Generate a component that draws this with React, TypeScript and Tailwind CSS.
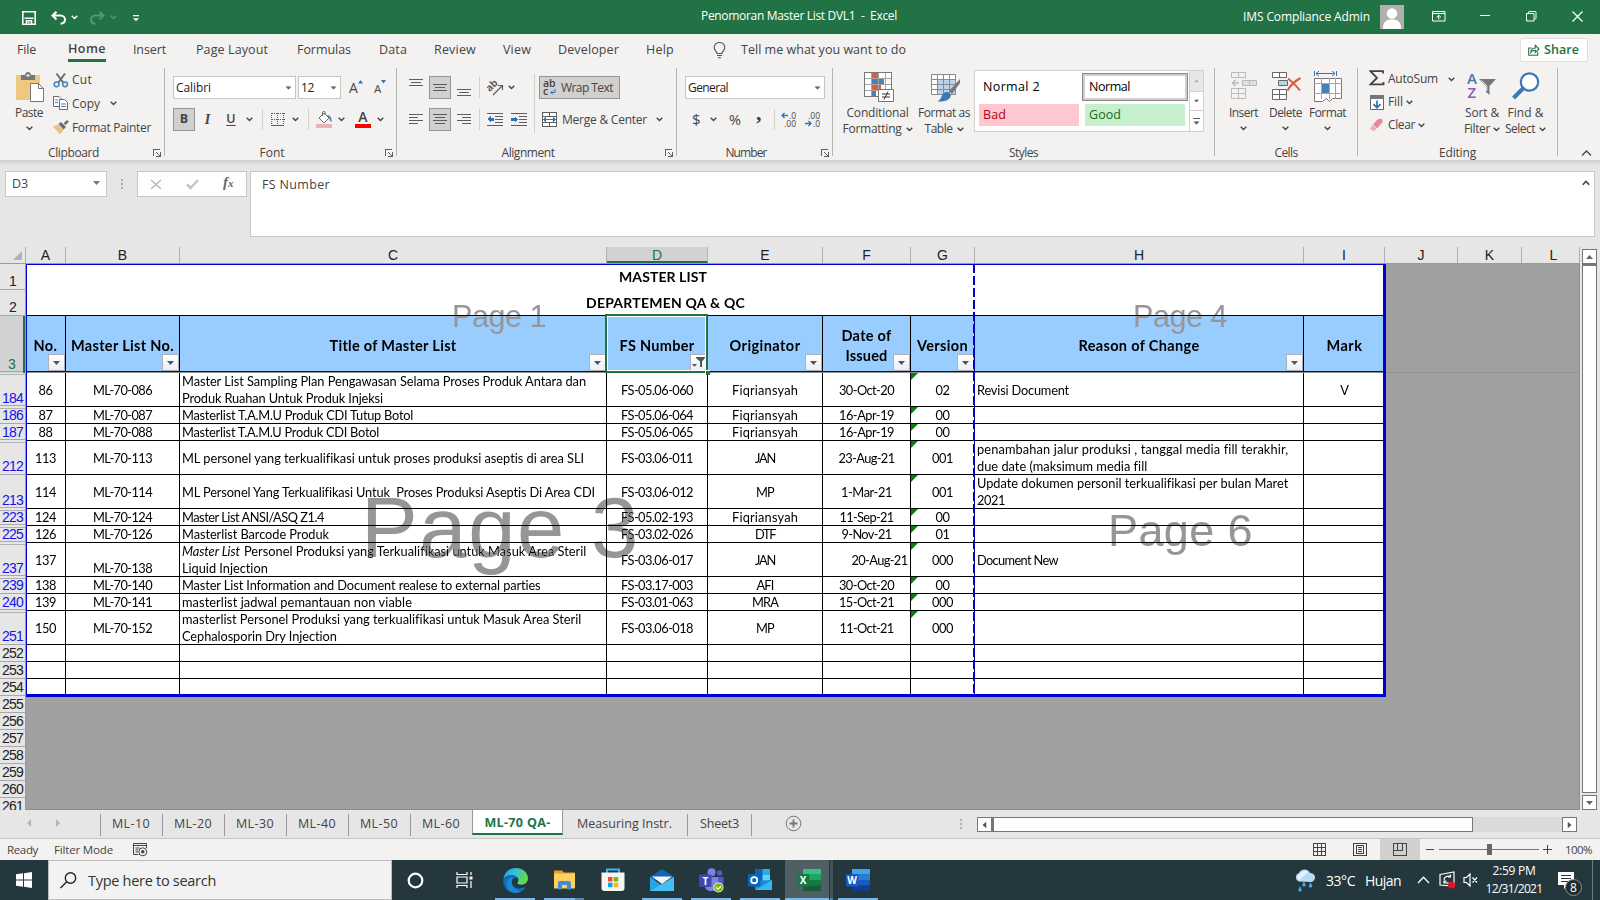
import { useLayoutEffect, useRef, useState, type ReactNode } from "react";

/* Text set to an exact advance width by spreading the difference over its letters. */
function Fit({ w, t, c = "" }: { w: number; t: string; c?: string }) {
  const ref = useRef<HTMLSpanElement>(null);
  const [ls, setLs] = useState(0);
  useLayoutEffect(() => {
    if (ref.current) {
      const nat = ref.current.getBoundingClientRect().width;
      setLs((w - nat) / t.length);
    }
  }, []);
  return (
    <span className={`inline-block shrink-0 whitespace-pre ${c}`} style={{ width: w }}>
      <span ref={ref} style={{ letterSpacing: ls }}>{t}</span>
    </span>
  );
}

function Chev({ c = "" }: { c?: string }) {
  return (
    <svg className={`shrink-0 ${c}`} width="7" height="5" viewBox="0 0 7 5" fill="none" stroke="currentColor" strokeWidth="1.4">
      <path d="M0.7 0.8 3.5 3.5 6.3 0.8" />
    </svg>
  );
}
function Tri({ c = "" }: { c?: string }) {
  return (
    <svg className={`shrink-0 ${c}`} width="7" height="4" viewBox="0 0 7 4" fill="currentColor">
      <path d="M0 0h7L3.5 4z" />
    </svg>
  );
}

/* Horizontal text-line icon; every entry is [x, y, width]. */
function Lines({ l, w = 14, h = 13, c = "", children }: { l: number[][]; w?: number; h?: number; c?: string; children?: ReactNode }) {
  return (
    <svg className={`shrink-0 ${c}`} width={w} height={h} shapeRendering="crispEdges">
      {l.map((a, i) => (
        <rect key={i} x={a[0]} y={a[1]} width={a[2]} height="1" fill="#5f5d5b" />
      ))}
      {children}
    </svg>
  );
}

function TitleBar() {
  return (
    <header className="flex h-[34px] items-center bg-[#217346] text-[12px] text-white">
      <svg className="ml-[22px] mt-[2px]" width="14" height="14" fill="none" stroke="#fff" strokeWidth="1.6">
        <path d="M0.8 0.8h12.4v12.4H0.8zM2.5 7.2h9M4.5 13V9.8h5V13" />
        <path d="M6 11.5h1.5" />
      </svg>
      <svg className="ml-[15px] mt-[2px]" width="15" height="14" fill="none" stroke="#fff" strokeWidth="2">
        <path d="M5.5 0.8 1.5 4.6 5.5 8.4M1.5 4.6H9.5c3 0 4.5 2 4.5 4s-1.600 4-4.500 4.200" />
      </svg>
      <Chev c="ml-[5px]" />
      <svg className="ml-[12px] mt-[2px] opacity-25" width="15" height="14" fill="none" stroke="#fff" strokeWidth="2">
        <path d="M9.500 0.800 13.500 4.600 9.500 8.400M13.500 4.600H5.500c-3 0-4.500 2-4.500 4s1.600 4 4.500 4.200" />
      </svg>
      <Chev c="ml-[5px] opacity-25" />
      <svg className="ml-[16px] mt-[2px]" width="6" height="7" fill="#fff">
        <path d="M0 0h6v1.200H0zM0 3.300h6L3 6.300z" />
      </svg>
      <Fit c="ml-[562px] -mt-[3px]" w={196} t="Penomoran Master List DVL1  -  Excel" />
      <Fit c="ml-[346px]" w={127} t="IMS Compliance Admin" />
      <svg className="ml-[10px]" width="24" height="24">
        <rect width="24" height="24" fill="#b1b0af" />
        <circle cx="12" cy="8.500" r="5.200" fill="#fff" />
        <path d="M3 24c0-7 2.500-9.500 9-9.500s9 2.500 9 9.500z" fill="#fff" />
      </svg>
      <svg className="ml-[28px] -mt-[2px]" width="14" height="11" fill="none" stroke="#fff">
        <path d="M0.500 0.500h12.500v9.500H0.500zM0.500 2.500h12.500M6.700 8.500V4.500M4.500 6.300 6.700 4.200 9 6.300" />
      </svg>
      <div className="ml-[34px] -mt-[3px] h-px w-[10px] bg-white" />
      <svg className="ml-[36px] -mt-[2px]" width="11" height="11" fill="none" stroke="#fff">
        <path d="M0.500 2.500h7.500v7.500H0.500zM2.500 2.300V1.200q0-.7.700-.7h6q.8 0 .8.800v6q0 .7-.7.700h-1" />
      </svg>
      <svg className="ml-[35px] -mt-[2px]" width="11" height="11" fill="none" stroke="#fff" strokeWidth="1.200">
        <path d="M0.500 0.500l10 10M10.500 0.500l-10 10" />
      </svg>
    </header>
  );
}

function Tabs() {
  return (
    <nav className="flex h-[34px] items-center text-[12.5px] text-[#444]">
      <Fit c="ml-[17px] -mt-[1px]" w={19} t="File" />
      <div className="ml-[32px] flex h-[28px] w-[38px] flex-col self-start border-b-[3px] border-[#217346] pt-[6px]">
        <Fit c="font-semibold" w={38} t="Home" />
      </div>
      <Fit c="ml-[27px] -mt-[1px]" w={33} t="Insert" />
      <Fit c="ml-[30px] -mt-[1px]" w={72} t="Page Layout" />
      <Fit c="ml-[29px] -mt-[1px]" w={54} t="Formulas" />
      <Fit c="ml-[28px] -mt-[1px]" w={28} t="Data" />
      <Fit c="ml-[27px] -mt-[1px]" w={42} t="Review" />
      <Fit c="ml-[27px] -mt-[1px]" w={28} t="View" />
      <Fit c="ml-[27px] -mt-[1px]" w={61} t="Developer" />
      <Fit c="ml-[27px] -mt-[1px]" w={28} t="Help" />
      <svg className="ml-[39px] -mt-[1px]" width="13" height="17" fill="none" stroke="#555" strokeWidth="1.100">
        <path d="M4 11.500C4 9.500 1.200 8.500 1.200 5.500a5.300 5 0 0 1 10.600 0C11.800 8.500 9 9.500 9 11.500zM4 13.500h5M5 15.800h3" />
      </svg>
      <Fit c="ml-[15px] -mt-[1px]" w={165} t="Tell me what you want to do" />
      <div className="-mt-[3px] ml-[614px] flex h-[24px] w-[68px] items-center rounded-[2px] border border-[#e1dfdd] bg-white font-semibold text-[#217346]">
        <svg className="ml-[7px]" width="12" height="12" fill="none" stroke="#217346" strokeWidth="1.100">
          <path d="M3.500 4H0.700v7.300h9V8M2.800 8.500C3 5.500 4.500 4 7.300 4V1.300l3.700 3.700-3.700 3.400V6.300C5 6.200 4 6.800 2.800 8.500z" />
        </svg>
        <Fit c="ml-[4px] mt-px" w={35} t="Share" />
      </div>
    </nav>
  );
}

function Group({ c, label, w, launcher, children }: { c: string; label: string; w: number; launcher?: boolean; children: ReactNode }) {
  return (
    <section className={`flex h-[92px] shrink-0 ${c}`}>
      <div className="flex min-w-0 flex-1 flex-col">
        <div className="h-[76px]">{children}</div>
        <div className="flex h-[16px] items-center">
          <div className={`flex flex-1 justify-center ${launcher ? "pr-[6px]" : ""}`}><Fit c="mt-px" w={w} t={label} /></div>
          {launcher && (
            <svg className="mr-[3px] mt-px shrink-0" width="8" height="8" fill="none" stroke="#605e5c" shapeRendering="crispEdges">
              <path d="M0.500 7V0.500H7M3 3l4 4M7.500 3v4.500H3" />
            </svg>
          )}
        </div>
      </div>
      <div className="h-[88px] w-px bg-[#b8b6b4]" />
    </section>
  );
}

function Sep({ c = "" }: { c?: string }) {
  return <div className={`h-[21px] w-px shrink-0 bg-[#d2d0ce] ${c}`} />;
}

function ClipboardGroup() {
  return (
    <Group c="w-[165px]" label="Clipboard" w={51} launcher>
      <div className="flex">
        <div className="flex w-[53px] flex-col items-center pl-[5px]">
          <svg className="ml-[3px] mt-[4px]" width="29" height="31">
            <path d="M0 3h24v25H0z" fill="#edc87e" />
            <path d="M5 3h4c0-4 6-4 6 0h4v5H5z" fill="#777" />
            <rect x="10.500" y="2.500" width="3" height="2" fill="#f3f2f1" />
            <path d="M14.500 11.500h8l5 5V29.500h-13z" fill="#fff" stroke="#777" />
            <path d="M22.500 11.500v5h5" fill="none" stroke="#777" />
          </svg>
          <Fit c="mt-[2px] leading-4" w={28} t="Paste" />
          <Chev c="mt-[5px]" />
        </div>
        <div className="flex flex-col">
          <div className="mt-px flex h-[21px] items-center">
            <svg width="16" height="16" fill="none" strokeWidth="1.500">
              <path d="M3.500 1.500 10.500 11M12 1.500 5 11" stroke="#6b6b6b" strokeWidth="2" />
              <circle cx="3.600" cy="12.300" r="2.400" stroke="#4a7fb8" />
              <circle cx="12" cy="12.300" r="2.400" stroke="#4a7fb8" />
            </svg>
            <Fit c="ml-[3px]" w={20} t="Cut" />
          </div>
          <div className="mt-[3px] flex h-[21px] items-center">
            <svg width="16" height="15" fill="#fff" stroke="#6b6b6b">
              <path d="M0.500 0.500h5.500l2 2V10.500h-7.500z" />
              <path d="M6.500 3.500h5l3 3V13.500h-8z" />
              <path d="M2 4h3M2 6.500h3M8 8h5M8 10.500h5" stroke="#4a7fb8" />
            </svg>
            <Fit c="ml-[3px]" w={28} t="Copy" />
            <Chev c="ml-[10px]" />
          </div>
          <div className="mt-[3px] flex h-[21px] items-center">
            <svg width="16" height="15">
              <path d="M0 6.500 5 4.500 10.500 10 7 14.500z" fill="#edc081" />
              <path d="M5.500 4 8 2l5 5-2.500 2.500zM10.500 3.500 14 0l1.800 1.800L12.500 5z" fill="#6b6b6b" />
            </svg>
            <Fit c="ml-[3px]" w={79} t="Format Painter" />
          </div>
        </div>
      </div>
    </Group>
  );
}

function FontGroup() {
  return (
    <Group c="w-[232px]" label="Font" w={25} launcher>
      <div className="flex h-[31px] pt-[8px]">
        <div className="ml-[8px] flex h-[23px] w-[123px] items-center border border-[#c8c6c4] bg-white text-[#222]">
          <Fit c="ml-[2px]" w={35} t="Calibri" />
          <Tri c="ml-auto mr-[3px] scale-90 text-[#666]" />
        </div>
        <div className="ml-[2px] flex h-[23px] w-[43px] items-center border border-[#c8c6c4] bg-white text-[#222]">
          <Fit c="ml-[2px]" w={13} t="12" />
          <Tri c="ml-auto mr-[3px] scale-90 text-[#666]" />
        </div>
        <div className="ml-[8px] flex h-[23px] w-[14px] items-start text-[14px]">
          <span className="w-[9px] leading-[23px]">A</span>
          <svg className="mt-[4px] shrink-0" width="5" height="4" fill="#2f75b5"><path d="M0 3.500 2.500 0 5 3.500z" /></svg>
        </div>
        <div className="ml-[11px] flex h-[23px] w-[14px] items-start text-[11.500px]">
          <span className="w-[7px] pt-[1px] leading-[23px]">A</span>
          <svg className="mt-[4px] shrink-0" width="5" height="4" fill="#2f75b5"><path d="M0 0h5L2.500 3.500z" /></svg>
        </div>
      </div>
      <div className="mt-[9px] flex h-[23px] items-center">
        <div className="ml-[8px] flex h-[23px] w-[22px] items-center justify-center border border-[#979593] bg-[#d2d0ce] text-[12.500px] font-bold">B</div>
        <span className="ml-[8px] w-[9px] text-center text-[14px] italic font-bold font-['Liberation_Serif',serif]">I</span>
        <span className="ml-[14px] w-[10px] text-center text-[12.500px] font-semibold underline underline-offset-2">U</span>
        <Chev c="ml-[10px]" />
        <Sep c="ml-[9px]" />
        <svg className="ml-[8px]" width="14" height="14" fill="none" stroke="#605e5c" shapeRendering="crispEdges">
          <path d="M0.500 0.500h13M0.500 6.500h13M0.500 0v12M6.500 0v12M12.500 0v12" strokeDasharray="1 1" />
          <path d="M0 12.500h13" strokeWidth="1.500" />
        </svg>
        <Chev c="ml-[7px]" />
        <Sep c="ml-[9px]" />
        <svg className="ml-[7px]" width="16" height="17">
          <path d="M3 7 8 2l5 5-5 5z" fill="#fff" stroke="#6b6b6b" />
          <path d="M6.500 5V1.500c0-1.500 2.500-1.500 2.500 0V4" fill="none" stroke="#6b6b6b" />
          <path d="M11 4c3 0 5 2 4.500 7-1.500-.5-2-2-2-4z" fill="#4a7fb8" />
          <rect y="13" width="16" height="4" fill="#e8b4b4" />
        </svg>
        <Chev c="ml-[6px]" />
        <div className="ml-[10px] flex h-[17px] w-[16px] flex-col items-center border-b-4 border-[#f00] text-[14px] font-semibold leading-[12px]">A</div>
        <Chev c="ml-[6px]" />
      </div>
    </Group>
  );
}

const pressed = "flex h-[23px] w-[22px] shrink-0 items-center justify-center border border-[#979593] bg-[#d2d0ce]";

function AlignmentGroup() {
  return (
    <Group c="w-[280px]" label="Alignment" w={53} launcher>
      <div className="flex">
        <div className="flex w-[137px] flex-col">
          <div className="mt-[8px] flex h-[23px] items-center">
            <Lines c="ml-[12px]" h={17} l={[[0, 0, 14], [2, 3, 10], [0, 6, 14]]} />
            <div className={`ml-[6px] ${pressed}`}><Lines h={7} l={[[0, 0, 14], [2, 3, 10], [0, 6, 14]]} /></div>
            <Lines c="ml-[6px]" h={17} l={[[0, 10, 14], [2, 13, 10], [0, 16, 14]]} />
            <Sep c="ml-[8px]" />
            <svg className="ml-[7px] overflow-visible" width="17" height="17" fill="none" stroke="#605e5c">
              <text x="0" y="9.500" transform="rotate(-45 6 8)" fontSize="10" fill="#605e5c" stroke="none" fontWeight="700">ab</text>
              <path d="M6 16 15 7M11 6.500h4.500V11" strokeWidth="1.200" />
            </svg>
            <Chev c="ml-[4px]" />
          </div>
          <div className="mt-[9px] flex h-[23px] items-center">
            <Lines c="ml-[12px]" l={[[0, 1, 14], [0, 4, 9], [0, 7, 14], [0, 10, 9]]} />
            <div className={`ml-[6px] ${pressed}`}><Lines l={[[0, 1, 14], [2, 4, 10], [0, 7, 14], [2, 10, 10]]} /></div>
            <Lines c="ml-[6px]" l={[[0, 1, 14], [5, 4, 9], [0, 7, 14], [5, 10, 9]]} />
            <Sep c="ml-[8px]" />
            <Lines c="ml-[7px]" w={16} l={[[0, 0, 16], [8, 3, 8], [8, 6, 8], [8, 9, 8], [0, 12, 16]]}>
              <path d="M0 6 3.500 3v2H7v2.500H3.500V9.500z" fill="#2f75b5" />
            </Lines>
            <Lines c="ml-[8px]" w={16} l={[[0, 0, 16], [8, 3, 8], [8, 6, 8], [8, 9, 8], [0, 12, 16]]}>
              <path d="M7 6 3.500 3v2H0v2.500h3.500V9.500z" fill="#2f75b5" />
            </Lines>
          </div>
        </div>
        <div className="mt-[6px] h-[59px] w-px bg-[#d2d0ce]" />
        <div className="flex flex-col">
          <div className="ml-[4px] mt-[8px] flex h-[23px] w-[81px] items-center border border-[#979593] bg-[#d2d0ce]">
            <svg className="ml-[3px] overflow-visible" width="14" height="17" fontSize="10.500" fontWeight="600" fill="#444">
              <text x="0" y="8">ab</text>
              <text x="0" y="16">c</text>
              <path d="M12 10v3.500H8M9.800 11.500l-2 2 2 2" fill="none" stroke="#2f75b5" />
            </svg>
            <Fit c="ml-[4px]" w={52} t="Wrap Text" />
          </div>
          <div className="ml-[7px] mt-[9px] flex h-[23px] items-center">
            <svg width="15" height="15" fill="#fff" stroke="#605e5c" shapeRendering="crispEdges">
              <path d="M0.500 0.500h14v14H0.500zM0.500 4.500h14M0.500 10.500h14M7.500 0.500v4M7.500 10.500v4" />
              <path d="M2 7.500h11M4 5.500l-2 2 2 2M11 5.500l2 2-2 2" fill="none" stroke="#2f75b5" />
            </svg>
            <Fit c="ml-[5px]" w={85} t="Merge & Center" />
            <Chev c="ml-[9px]" />
          </div>
        </div>
      </div>
    </Group>
  );
}

function Decimal({ a, b, left, c }: { a: string; b: string; left?: boolean; c: string }) {
  return (
    <svg className={`shrink-0 overflow-visible ${c}`} width="16" height="16" fontSize="8.500" fill="#444">
      <text x="15" y="7" textAnchor="end">{a}</text>
      <text x="15" y="15" textAnchor="end">{b}</text>
      {left ? (
        <path d="M1 3.500h6M3.500 1 1 3.500 3.500 6" fill="none" stroke="#2f75b5" strokeWidth="1.300" />
      ) : (
        <path d="M0 11.500h6M3.500 9 6 11.500 3.500 14" fill="none" stroke="#2f75b5" strokeWidth="1.300" />
      )}
    </svg>
  );
}

function NumberGroup() {
  return (
    <Group c="w-[156px]" label="Number" w={41} launcher>
      <div className="ml-[8px] flex h-[31px] pt-[8px]">
        <div className="flex h-[23px] w-[140px] items-center border border-[#c8c6c4] bg-white text-[#222]">
          <Fit c="ml-[2px]" w={40} t="General" />
          <Tri c="ml-auto mr-[3px] scale-90 text-[#666]" />
        </div>
      </div>
      <div className="mt-[9px] flex h-[23px] items-center">
        <span className="ml-[15px] w-[9px] text-[15px]">$</span>
        <Chev c="ml-[9px]" />
        <span className="ml-[12px] w-[14px] text-[14.500px]">%</span>
        <span className="-mt-[15px] ml-[13px] w-[8px] font-['Liberation_Serif',serif] text-[22px] font-bold">,</span>
        <Sep c="ml-[10px]" />
        <Decimal c="ml-[6px]" a=".0" b=".00" left />
        <Decimal c="ml-[8px]" a=".00" b=".0" />
      </div>
    </Group>
  );
}

function StylesGroup() {
  return (
    <Group c="w-[382px]" label="Styles" w={29}>
      <div className="flex">
        <div className="flex w-[89px] flex-col items-center">
          <svg className="ml-[2px] mt-[4px]" width="30" height="30">
            <path d="M0.500 0.500h27v24H0.500z" fill="#fff" stroke="#777" />
            <path d="M8 1h6v6H8zM8 13h9v6H8z" fill="#d9603b" />
            <path d="M8 7h12v6H8zM8 19h4v6H8z" fill="#4a7fb8" />
            <path d="M0 6.500h28M0 12.500h28M0 18.500h28M7.500 0v25M14.500 0v25M21.500 0v25" stroke="#a5a5a5" fill="none" />
            <path d="M0.500 0.500h27v24H0.500z" fill="none" stroke="#777" />
            <path d="M14.500 17.500h15v12h-15z" fill="#fff" stroke="#777" />
            <path d="M18 22h8M18 25h8M24 19.500l-4 8" stroke="#333" fill="none" />
          </svg>
          <Fit c="mt-[3px] leading-4" w={62} t="Conditional" />
          <div className="flex items-center">
            <Fit c="leading-4" w={59} t="Formatting" />
            <Chev c="ml-[4px]" />
          </div>
        </div>
        <div className="-ml-[6px] flex w-[56px] flex-col items-center">
          <svg className="ml-[4px] mt-[6px]" width="30" height="28">
            <path d="M0.500 0.500h24v20H0.500z" fill="#fff" />
            <path d="M7 5h18v16H7z" fill="#bdd3ec" />
            <path d="M0.500 0.500h24v20H0.500zM0 5.500h25M0 10.500h25M0 15.500h25M6.500 0v21M12.500 0v21M18.500 0v21" stroke="#8a8a8a" fill="none" />
            <path d="M29 5 18 17l3 3 8-11z" fill="#777" />
            <path d="M17 18c-3-.5-5 1-6 3.500S9 26 6.500 27.500C12 28 19 27 20 21z" fill="#3f78b5" />
          </svg>
          <Fit c="mt-[3px] leading-4" w={52} t="Format as" />
          <div className="flex items-center">
            <Fit c="leading-4" w={28} t="Table" />
            <Chev c="ml-[4px]" />
          </div>
        </div>
        <div className="ml-[2px] mt-[2px] flex h-[62px] w-[230px] border border-[#d2d0ce] bg-white text-[12.500px] text-black">
          <div className="flex w-[106px] flex-col pl-[4px]">
            <Fit c="ml-[4px] mt-[7px] leading-[18px]" w={57} t="Normal 2" />
            <div className="mt-[8px] flex h-[22px] w-[100px] items-center bg-[#ffc7ce] pl-[4px] text-[#b00015]">
              <Fit w={23} t="Bad" />
            </div>
          </div>
          <div className="flex w-[108px] flex-col">
            <div className="ml-[1px] mt-[2px] flex h-[28px] w-[106px] items-center border border-[#8a8886] p-0">
              <div className="flex h-[26px] w-[104px] items-center border-2 border-[#d2d0ce] pl-[4px]"><Fit w={41} t="Normal" /></div>
            </div>
            <div className="ml-[4px] mt-[3px] flex h-[22px] w-[100px] items-center bg-[#c6efce] pl-[4px] text-[#176b17]">
              <Fit w={32} t="Good" />
            </div>
          </div>
          <div className="flex w-[14px] flex-col border-l border-[#d2d0ce] text-[#605e5c]">
            <div className="flex h-[21px] items-center justify-center border-b border-[#d2d0ce] bg-[#e9e7e5]"><Tri c="rotate-180 scale-75 opacity-40" /></div>
            <div className="flex h-[19px] items-center justify-center border-b border-[#d2d0ce]"><Tri c="scale-75" /></div>
            <div className="flex flex-1 flex-col items-center justify-center gap-[2px]"><div className="h-px w-[7px] bg-[#605e5c]" /><Tri c="scale-90" /></div>
          </div>
        </div>
      </div>
    </Group>
  );
}

function CellsGroup() {
  return (
    <Group c="w-[143px]" label="Cells" w={23}>
      <div className="flex text-[#444]">
        <div className="ml-[8px] flex w-[41px] flex-col items-center">
          <svg className="ml-[2px] mt-[4px] opacity-45" width="27" height="28" fill="#f8f4fb" stroke="#777">
            <path d="M0.500 0.500h14v5h-14zM7.500 0.500v5M0.500 16.500h14v10h-14zM7.500 16.500v10M0.500 21.500h14" />
            <path d="M11.500 8.500h14v5h-14zM18.500 8.500v5" fill="#ccc" />
            <path d="M8 11H1.500M4.500 8 1.500 11l3 3" fill="none" strokeWidth="1.500" />
          </svg>
          <Fit c="mt-[5px] leading-4" w={29} t="Insert" />
          <Chev c="mt-[5px]" />
        </div>
        <div className="flex w-[43px] flex-col items-center">
          <svg className="ml-[2px] mt-[4px]" width="30" height="28" fill="#fff" stroke="#666">
            <path d="M0.500 0.500h14v5h-14zM7.500 0.500v5M0.500 17.500h14v10h-14zM7.500 17.500v10M0.500 22.500h14" />
            <path d="M6.500 8.500h9v5h-9z" fill="#b9d2ec" />
            <path d="M16 6.500c4 3 9 8 12 12M28.500 6C23 9 18 14 15.500 18.500" fill="none" stroke="#dd5a39" strokeWidth="2" />
          </svg>
          <Fit c="mt-[5px] leading-4" w={33} t="Delete" />
          <Chev c="mt-[5px]" />
        </div>
        <div className="flex w-[41px] flex-col items-center">
          <svg className="ml-[2px] mt-[3px]" width="29" height="31" fill="#fff" stroke="#777">
            <path d="M0.500 7.500h27v20h-9l-3 3-3-3-4 3H0.500z" />
            <path d="M0 12.500h28M0 22.500h28M7.500 7v21M15.500 7v21M21.500 7v21" stroke="#a5a5a5" />
            <path d="M8 13h7v9H8z" fill="#4a7fb8" stroke="none" />
            <path d="M0.500 0v5M22.500 0v5M2 2.500h19M5 0 2 2.500 5 5M18 0l3 2.500L18 5" fill="none" stroke="#2f75b5" />
          </svg>
          <Fit c="mt-[3px] leading-4" w={37} t="Format" />
          <Chev c="mt-[5px]" />
        </div>
      </div>
    </Group>
  );
}

function EditingGroup() {
  return (
    <Group c="w-[200px]" label="Editing" w={37}>
      <div className="flex">
        <div className="flex w-[98px] flex-col pl-[11px]">
          <div className="flex h-[22px] items-center">
            <svg className="-mt-[2px]" width="16" height="16" fill="none" stroke="#444" strokeWidth="1.800">
              <path d="M14 3.500V1.200H1.500L8 8l-6.500 6.300H14.500V12" />
            </svg>
            <Fit c="ml-[3px]" w={50} t="AutoSum" />
            <Chev c="ml-[10px]" />
          </div>
          <div className="mt-[1px] flex h-[22px] items-center pl-px">
            <svg width="14" height="15">
              <path d="M0.500 0.500h13v14H0.500z" fill="#fff" stroke="#666" />
              <path d="M0 0h14v4H0z" fill="#777" />
              <path d="M7 5.500v7M3.500 9.200 7 12.700l3.500-3.500" fill="none" stroke="#2f75b5" strokeWidth="1.700" />
            </svg>
            <Fit c="ml-[4px]" w={15} t="Fill" />
            <Chev c="ml-[3px]" />
          </div>
          <div className="mt-[1px] flex h-[22px] items-center">
            <svg width="15" height="14">
              <path d="M8.500 1.500 12 0.500l2 3-6 7-4-4z" fill="#e8879c" />
              <path d="M3.500 7 7.500 11 5 13 1 11z" fill="#efa9b8" />
            </svg>
            <Fit c="ml-[4px]" w={27} t="Clear" />
            <Chev c="ml-[3px]" />
          </div>
        </div>
        <div className="ml-[3px] flex w-[46px] flex-col items-center">
          <svg className="mt-[3px] overflow-visible" width="30" height="28" fontSize="15" fontWeight="600">
            <text x="0" y="12.500" fill="#3f78b5">A</text>
            <text x="0.500" y="27" fill="#9259b5">Z</text>
            <path d="M12 8h17l-6.500 7v9l-3.500-3v-6z" fill="#777" />
            <path d="M14.500 9.500 19.800 15v5" stroke="#f3f2f1" fill="none" />
          </svg>
          <Fit c="mt-[6px] leading-4" w={34} t="Sort &" />
          <div className="flex items-center"><Fit c="leading-4" w={26} t="Filter" /><Chev c="ml-[3px]" /></div>
        </div>
        <div className="flex w-[41px] flex-col items-center">
          <svg className="mt-[4px]" width="28" height="28" fill="none" stroke="#3f78b5">
            <circle cx="17.500" cy="10" r="8.700" strokeWidth="2.200" fill="#fff" />
            <path d="M11 16.500 1.500 26" strokeWidth="4" />
          </svg>
          <Fit c="mt-[5px] leading-4" w={36} t="Find &" />
          <div className="flex items-center"><Fit c="leading-4" w={30} t="Select" /><Chev c="ml-[4px]" /></div>
        </div>
      </div>
    </Group>
  );
}

function Ribbon() {
  return (
    <div className="flex h-[92px] text-[12px] text-[#444]">
      <ClipboardGroup />
      <FontGroup />
      <AlignmentGroup />
      <NumberGroup />
      <StylesGroup />
      <CellsGroup />
      <EditingGroup />
      <svg className="ml-[23px] mt-[82px]" width="11" height="7" fill="none" stroke="#444" strokeWidth="1.300"><path d="M1 5.500 5.500 1 10 5.500" /></svg>
    </div>
  );
}

function FormulaBar() {
  return (
    <div className="flex h-[87px] bg-gradient-to-b from-[#cfcfcf] from-0% to-[#e6e6e6] to-7% pt-[11px] text-[12.500px] text-[#444]">
      <div className="ml-[5px] flex h-[26px] w-[102px] items-center border border-[#c6c6c6] bg-white">
        <Fit c="ml-[6px]" w={16} t="D3" />
        <Tri c="-mt-[2px] ml-auto mr-[6px] text-[#777]" />
      </div>
      <div className="ml-[14px] mt-[8px] flex h-[10px] w-[2px] flex-col justify-between">
        <div className="h-[2px] bg-[#b0b0b0]" /><div className="h-[2px] bg-[#b0b0b0]" /><div className="h-[2px] bg-[#b0b0b0]" />
      </div>
      <div className="ml-[14px] flex h-[26px] w-[110px] items-center border border-[#c6c6c6] bg-white">
        <svg className="ml-[12px]" width="12" height="11" fill="none" stroke="#bcbcbc" strokeWidth="1.600"><path d="M1 1l10 9M11 1 1 10" /></svg>
        <svg className="ml-[24px]" width="13" height="11" fill="none" stroke="#c4c4c4" strokeWidth="2.500"><path d="M1 5.500 4.500 9 12 1" /></svg>
        <span className="-mt-[3px] ml-[24px] font-['Liberation_Serif',serif] text-[15px] font-bold italic text-[#666]">f<span className="text-[11px]">x</span></span>
      </div>
      <div className="ml-[3px] flex h-[66px] w-[1345px] justify-between border border-[#c6c6c6] bg-white">
        <Fit c="ml-[11px] mt-[4px] leading-[18px]" w={68} t="FS Number" />
        <svg className="mr-[4px] mt-[8px]" width="8" height="6" fill="none" stroke="#444" strokeWidth="1.600"><path d="M0.800 4.800 4 1.500 7.200 4.800" /></svg>
      </div>
    </div>
  );
}

const columns: [string, string][] = [
  ["A", "w-[40px]"], ["B", "w-[114px]"], ["C", "w-[427px]"], ["D", "w-[101px]"], ["E", "w-[115px]"], ["F", "w-[88px]"],
  ["G", "w-[64px]"], ["H", "w-[329px]"], ["I", "w-[81px]"], ["J", "w-[73px]"], ["K", "w-[64px]"], ["L", "w-[58px] pl-[6px]"],
];

function ColumnHeads() {
  return (
    <div className="flex h-[17px] w-[1580px] border-b border-[#9b9b9b] font-['Liberation_Sans',sans-serif] text-[14px] leading-[16px] text-[#222]">
      <div className="flex w-[26px] justify-end border-r border-[#b1b1b1] pr-[3px] pt-[4px]">
        <svg width="9" height="9" fill="#b1b1b1"><path d="M9 0v9H0z" /></svg>
      </div>
      {columns.map(([n, w]) => (
        <div key={n} className={`shrink-0 border-r border-[#b1b1b1] text-center ${w} ${n === "D" ? "border-b-2 border-b-[#217346] bg-[#d2d2d2] text-[#217346]" : ""}`}>{n}</div>
      ))}
    </div>
  );
}

type Head = { n: string; h: string; blue?: boolean; gap?: boolean; after?: boolean };
const heads: Head[] = [
  { n: "1", h: "h-[26px]" },
  { n: "2", h: "h-[26px]" },
  { n: "3", h: "h-[57px]", gap: true },
  { n: "184", h: "h-[34px]", blue: true, gap: true, after: true },
  { n: "186", h: "h-[17px]", blue: true, after: true },
  { n: "187", h: "h-[17px]", blue: true, gap: true },
  { n: "212", h: "h-[34px]", blue: true, after: true },
  { n: "213", h: "h-[34px]", blue: true, gap: true },
  { n: "223", h: "h-[17px]", blue: true, gap: true, after: true },
  { n: "225", h: "h-[17px]", blue: true, gap: true, after: true },
  { n: "237", h: "h-[34px]", blue: true, gap: true, after: true },
  { n: "239", h: "h-[17px]", blue: true, after: true },
  { n: "240", h: "h-[17px]", blue: true, gap: true },
  { n: "251", h: "h-[34px]", blue: true, after: true },
  ...["252", "253", "254", "255", "256", "257", "258", "259", "260", "261"].map((n) => ({ n, h: "h-[17px]" })),
];

function RowHeads() {
  return (
    <div className="flex h-[546px] w-[26px] shrink-0 flex-col overflow-hidden border-r border-[#9b9b9b] bg-[#e6e6e6] font-['Liberation_Sans',sans-serif] text-[14px]">
      {heads.map((r) => (
        <div key={r.n} className={`flex shrink-0 flex-col ${r.h} ${r.n === "3" ? "border-r-2 border-[#217346] bg-[#d2d2d2] text-[#217346]" : r.blue ? "text-[#1414e6]" : "text-[#222]"}`}>
          {r.after && <div className="mt-px h-px shrink-0 bg-[#b1b1b1]" />}
          <div className={`flex min-h-0 flex-1 items-end justify-center ${r.gap ? "" : "pb-px"}`}><Fit c="leading-[14px]" w={r.n.length * 7} t={r.n} /></div>
          <div className="h-px shrink-0 bg-[#a8a8a8]" />
          {r.gap && <div className="h-px shrink-0" />}
        </div>
      ))}
    </div>
  );
}

const grid = "grid grid-rows-[minmax(0,1fr)] grid-cols-[40px_114px_427px_101px_115px_88px_64px_329px_82px]";

function FilterButton({ active }: { active?: boolean }) {
  return (
    <div className="flex h-[17px] w-[17px] shrink-0 items-center justify-center border border-[#abb0bd] bg-gradient-to-b from-white to-[#eceef5] text-[#555]">
      {active ? (
        <svg width="13" height="11" fill="#555"><path d="M4 0h9v1L10 4.500V10H8V4.500L4 1zM0 7h5L2.500 9.800z" /></svg>
      ) : (
        <Tri />
      )}
    </div>
  );
}

const titles: { l: [string, number][]; f: boolean }[] = [
  { l: [["No.", 24]], f: true },
  { l: [["Master List No.", 103]], f: true },
  { l: [["Title of Master List", 127]], f: true },
  { l: [["FS Number", 75]], f: true },
  { l: [["Originator", 71]], f: true },
  { l: [["Date of", 50], ["Issued", 42]], f: true },
  { l: [["Version", 51]], f: true },
  { l: [["Reason of Change", 121]], f: true },
  { l: [["Mark", 36]], f: false },
];

type Line = [string, number];
type Row = { tall?: boolean; no: string; ml: string; mlLow?: boolean; title: Line[]; lead?: Line; fs: string; by: Line; date: Line; right?: boolean; ver: string; why?: Line[]; mark?: string };
const rows: Row[] = [
  { tall: true, no: "86", ml: "ML-70-086", title: [["Master List Sampling Plan Pengawasan Selama Proses Produk Antara dan", 404], ["Produk Ruahan Untuk Produk Injeksi", 201]], fs: "FS-05.06-060", by: ["Fiqriansyah", 66], date: ["30-Oct-20", 55], ver: "02", why: [["Revisi Document", 92]], mark: "V" },
  { no: "87", ml: "ML-70-087", title: [["Masterlist T.A.M.U Produk CDI Tutup Botol", 231]], fs: "FS-05.06-064", by: ["Fiqriansyah", 66], date: ["16-Apr-19", 55], ver: "00" },
  { no: "88", ml: "ML-70-088", title: [["Masterlist T.A.M.U Produk CDI Botol", 197]], fs: "FS-05.06-065", by: ["Fiqriansyah", 66], date: ["16-Apr-19", 55], ver: "00" },
  { tall: true, no: "113", ml: "ML-70-113", title: [["ML personel yang terkualifikasi untuk proses produksi aseptis di area SLI", 402]], fs: "FS-03.06-011", by: ["JAN", 20], date: ["23-Aug-21", 56], ver: "001", why: [["penambahan jalur produksi , tanggal media fill terakhir,", 311], ["due date (maksimum media fill", 170]] },
  { tall: true, no: "114", ml: "ML-70-114", title: [["ML Personel Yang Terkualifikasi Untuk  Proses Produksi Aseptis Di Area CDI", 413]], fs: "FS-03.06-012", by: ["MP", 18], date: ["1-Mar-21", 51], ver: "001", why: [["Update dokumen personil terkualifikasi per bulan Maret", 311], ["2021", 28]] },
  { no: "124", ml: "ML-70-124", title: [["Master List ANSI/ASQ Z1.4", 142]], fs: "FS-05.02-193", by: ["Fiqriansyah", 66], date: ["11-Sep-21", 54], ver: "00" },
  { no: "126", ml: "ML-70-126", title: [["Masterlist Barcode Produk", 147]], fs: "FS-03.02-026", by: ["DTF", 20], date: ["9-Nov-21", 50], ver: "01" },
  { tall: true, no: "137", ml: "ML-70-138", mlLow: true, lead: ["Master List", 58], title: [["Personel Produksi yang Terkualifikasi untuk Masuk Area Steril", 342], ["Liquid Injection", 86]], fs: "FS-03.06-017", by: ["JAN", 20], date: ["20-Aug-21", 56], right: true, ver: "000", why: [["Document New", 81]] },
  { no: "138", ml: "ML-70-140", title: [["Master List Information and Document realese to external parties", 359]], fs: "FS-03.17-003", by: ["AFI", 17], date: ["30-Oct-20", 55], ver: "00" },
  { no: "139", ml: "ML-70-141", title: [["masterlist jadwal pemantauan non viable", 230]], fs: "FS-03.01-063", by: ["MRA", 26], date: ["15-Oct-21", 55], ver: "000" },
  { tall: true, no: "150", ml: "ML-70-152", title: [["masterlist Personel Produksi yang terkualifikasi untuk Masuk Area Steril", 399], ["Cephalosporin Dry Injection", 155]], fs: "FS-03.06-018", by: ["MP", 18], date: ["11-Oct-21", 54], ver: "000" },
];

const cell = "flex min-w-0 flex-col items-center justify-center border-r border-b border-black pt-px";
const leftCell = "flex min-w-0 flex-col items-start justify-center border-r border-b border-black pl-[2px] pt-px";

function DataRow({ r }: { r: Row }) {
  return (
    <div className={`${grid} ${r.tall ? "h-[34px]" : "h-[17px]"}`}>
      <div className={cell}><Fit w={r.no.length * 7} t={r.no} /></div>
      <div className={cell}><Fit c={r.mlLow ? "mt-[17px]" : ""} w={59} t={r.ml} /></div>
      <div className={leftCell}>
        {r.title.map(([t, w], i) => (
          <div key={t} className="flex">
            {i === 0 && r.lead && <Fit c="mr-[4px] italic" w={r.lead[1]} t={r.lead[0]} />}
            <Fit w={w} t={t} />
          </div>
        ))}
      </div>
      <div className={cell}><Fit w={72} t={r.fs} /></div>
      <div className={cell}><Fit w={r.by[1]} t={r.by[0]} /></div>
      <div className={cell}><Fit c={r.right ? "ml-[26px]" : ""} w={r.date[1]} t={r.date[0]} /></div>
      <div className={`${cell} relative`}>
        <svg className="absolute left-0 top-0" width="7" height="7" fill="#0a7d0a"><path d="M0 0h7L0 7z" /></svg>
        <Fit w={r.ver.length * 7} t={r.ver} />
      </div>
      <div className={leftCell}>{r.why?.map(([t, w]) => <Fit key={t} w={w} t={t} />)}</div>
      <div className={cell}>{r.mark}</div>
    </div>
  );
}

function Watermark({ c, w, t }: { c: string; w: number; t: string }) {
  return <div className={`absolute font-['Liberation_Sans',sans-serif] text-[#969696] mix-blend-darken ${c}`}><Fit w={w} t={t} /></div>;
}

function Sheet() {
  return (
    <div className="relative h-[546px] w-[1554px] shrink-0 border-r border-b border-[#8f8f8f] bg-[#a0a0a0]">
      <div className="relative isolate h-[433px] w-[1360px] bg-white font-['Lato',sans-serif] text-[12.800px] leading-[17px] text-black">
        <div className="flex h-[51px] flex-col items-start text-[14px] font-bold leading-[20px]">
          <Fit c="ml-[593px] mt-[3px]" w={88} t="MASTER LIST" />
          <Fit c="ml-[560px] mt-[6px]" w={159} t="DEPARTEMEN QA & QC" />
        </div>
        <div className={`${grid} h-[57px] border-t border-black bg-[#99ccff] text-[14.500px] font-bold leading-[20px]`}>
          {titles.map((t, i) => (
            <div key={i} className="relative flex min-w-0 flex-col items-center justify-center border-r border-black pt-[3px]">
              {t.l.map(([s, w]) => <Fit key={s} w={w} t={s} />)}
              {t.f && <div className="absolute bottom-[1px] right-0"><FilterButton active={i === 3} /></div>}
            </div>
          ))}
        </div>
        <div className="h-px bg-[#8f8f8f]" />
        {rows.map((r) => <DataRow key={r.no} r={r} />)}
        {[0, 1, 2].map((k) => (
          <div key={k} className={`${grid} h-[17px]`}>
            {titles.map((_, i) => <div key={i} className={cell} />)}
          </div>
        ))}
        <Watermark c="left-[426px] top-[32px] text-[30.500px] leading-[40px]" w={94} t="Page 1" />
        <Watermark c="left-[1107px] top-[32px] text-[30.500px] leading-[40px]" w={94} t="Page 4" />
        <Watermark c="left-[335px] top-[214px] text-[85px] leading-[100px]" w={279} t="Page 3" />
        <Watermark c="left-[1082px] top-[237px] text-[45px] leading-[60px]" w={145} t="Page 6" />
        <div className="absolute inset-0 border-b-[3px] border-l border-r-[3px] border-t border-[#0000d4]" />
        <div className="absolute left-0 right-0 top-[107px] h-px bg-[#0000d4]" />
        <div className="absolute bottom-[3px] left-[947px] top-0 w-[2px] bg-[repeating-linear-gradient(to_bottom,#0000d4_0_9px,transparent_9px_12px)]" />
        <div className="absolute left-[579px] top-[50px] h-[59px] w-[103px] border-2 border-[#217346]">
          <div className="h-full w-full border border-white" />
        </div>
        <div className="absolute left-[679px] top-[106px] h-[5px] w-[5px] border-l border-t border-white bg-[#217346]" />
      </div>
      <div className="absolute left-[1360px] right-0 top-[108px] h-px bg-[#929292]" />
    </div>
  );
}

function Workbook() {
  return (
    <div className="flex h-[563px] bg-[#e6e6e6]">
      <div className="flex w-[1580px] flex-col">
        <ColumnHeads />
        <div className="flex"><RowHeads /><Sheet /></div>
      </div>
      <div className="ml-[2px] mt-[2px] flex h-[561px] w-[15px] flex-col text-[#666]">
        <div className="flex h-[15px] items-center justify-center border border-[#777] bg-white"><Tri c="rotate-180" /></div>
        <div className="h-[529px] border border-t-2 border-[#777] bg-white" />
        <div className="mt-[2px] flex h-[15px] items-center justify-center border border-[#777] bg-white"><Tri /></div>
      </div>
    </div>
  );
}

const sheetTabs = ["ML-10", "ML-20", "ML-30", "ML-40", "ML-50", "ML-60"];

function SheetTabs() {
  return (
    <div className="flex h-[29px] border-b border-[#c6c6c6] bg-[#e6e6e6] text-[12.500px] text-[#444]">
      <svg className="ml-[27px] mt-[9px]" width="4" height="8" fill="#b5b5b5"><path d="M4 0v8L0 4z" /></svg>
      <svg className="ml-[25px] mt-[9px]" width="4" height="8" fill="#b5b5b5"><path d="M0 0v8l4-4z" /></svg>
      <div className="ml-[40px] flex">
        {sheetTabs.map((t) => (
          <div key={t} className="mt-[4px] flex h-[22px] w-[62px] items-center border-l border-[#999] pb-[2px] pl-[11px]"><Fit w={38} t={t} /></div>
        ))}
      </div>
      <div className="flex h-[25px] w-[91px] items-center justify-center border-x border-b-2 border-x-[#999] border-b-[#217346] bg-white pt-[4px] text-[12.500px] font-bold text-[#217346]"><Fit w={66} t="ML-70 QA-" /></div>
      <div className="mt-[4px] flex h-[22px] w-[125px] items-center border-r border-[#999] pb-[2px] pl-[14px]"><Fit w={95} t="Measuring Instr." /></div>
      <div className="mt-[4px] flex h-[22px] w-[64px] items-center border-r border-[#999] pb-[2px] pl-[12px]"><Fit w={39} t="Sheet3" /></div>
      <svg className="ml-[33px] mt-[5px]" width="17" height="17" fill="none" stroke="#777"><circle cx="8.500" cy="8.500" r="7.300" /><path d="M4.500 8.500h8M8.500 4.500v8" strokeWidth="1.800" /></svg>
      <div className="ml-[158px] mt-[9px] flex h-[10px] w-[2px] flex-col justify-between">
        <div className="h-[2px] bg-[#b0b0b0]" /><div className="h-[2px] bg-[#b0b0b0]" /><div className="h-[2px] bg-[#b0b0b0]" />
      </div>
      <div className="ml-[15px] mt-[7px] flex h-[15px] w-[600px] bg-[#dadada] text-[#555]">
        <div className="flex w-[15px] items-center justify-center border border-[#777] bg-white"><Tri c="rotate-90" /></div>
        <div className="w-[481px] border border-l-2 border-[#777] bg-white" />
        <div className="ml-auto flex w-[15px] items-center justify-center border border-[#777] bg-white"><Tri c="-rotate-90" /></div>
      </div>
    </div>
  );
}

function StatusBar() {
  return (
    <div className="flex h-[21px] items-center bg-[#f3f2f1] text-[11.500px] text-[#444]">
      <Fit c="ml-[7px]" w={31} t="Ready" />
      <Fit c="ml-[16px]" w={59} t="Filter Mode" />
      <svg className="ml-[20px]" width="15" height="14" fill="none" stroke="#444">
        <path d="M13.500 5V0.500H0.500v11h5M0.500 2.500h13M2.500 5h4M2.500 7h2.500M2.500 9h2.500" />
        <circle cx="9.800" cy="8.800" r="4" /><circle cx="9.800" cy="8.800" r="1.800" fill="#444" stroke="none" />
      </svg>
      <svg className="ml-[1165px]" width="14" height="13" fill="none" stroke="#444" shapeRendering="crispEdges"><path d="M0.500 0.500h12v12h-12zM0.500 4.500h12M0.500 8.500h12M4.500 0.500v12M8.500 0.500v12" /></svg>
      <svg className="ml-[26px]" width="15" height="13" fill="none" stroke="#444" shapeRendering="crispEdges"><path d="M0.500 0.500h13v12H0.500zM3.500 2.500h7v8h-7zM5 4.500h4M5 6.500h4M5 8.500h4" /></svg>
      <div className="ml-[12px] flex h-[21px] w-[40px] items-center justify-center bg-[#d2d0ce]">
        <svg width="14" height="13" fill="none" stroke="#444" shapeRendering="crispEdges"><path d="M0.500 0.500h13v12H0.500zM4.500 0.500v7M9.500 0.500v7h-9" /></svg>
      </div>
      <div className="ml-[6px] h-px w-[8px] bg-[#444]" />
      <div className="ml-[5px] flex h-[11px] w-[100px] items-center">
        <div className="h-px w-[48px] bg-[#777]" /><div className="h-[11px] w-[5px] bg-[#666]" /><div className="h-px w-[47px] bg-[#777]" />
      </div>
      <svg className="ml-[4px]" width="9" height="9" stroke="#444" shapeRendering="crispEdges"><path d="M0 4.500h9M4.500 0v9" /></svg>
      <Fit c="ml-[13px]" w={27} t="100%" />
    </div>
  );
}

function Slot({ c, bar, children }: { c: string; bar?: boolean; children: ReactNode }) {
  return (
    <div className={`flex h-[40px] shrink-0 flex-col items-center justify-between ${c}`}>
      <div className="flex h-[38px] items-center pt-[2px]">{children}</div>
      {bar ? <div className="h-[2px] w-full bg-[#76b9ed]" /> : null}
    </div>
  );
}

function OfficeTile({ letter, dark, shades }: { letter: string; dark: string; shades: string[] }) {
  return (
    <svg width="24" height="22">
      {shades.map((s, i) => <rect key={i} x="6" y={i * 5.500} width="18" height="5.600" fill={s} />)}
      <rect y="5" width="12.500" height="12.500" rx="1" fill={dark} />
      <text x="6.200" y="15" textAnchor="middle" fontSize="10" fontWeight="700" fill="#fff">{letter}</text>
    </svg>
  );
}

function Taskbar() {
  return (
    <footer className="flex h-[40px] items-center bg-[#24373c] text-white">
      <svg className="ml-[16px]" width="16" height="16" fill="#fff"><path d="M0 2.300 7 1.300V7.600H0zM8 1.200 16 0v7.600H8zM0 8.500h7v6.200L0 13.700zM8 8.500h8V16L8 14.800z" /></svg>
      <div className="ml-[16px] flex h-[40px] w-[344px] items-center border border-[#bbb] bg-[#f2f2f2] text-[14.500px] text-[#333]">
        <svg className="ml-[11px]" width="17" height="17" fill="none" stroke="#222" strokeWidth="1.400"><circle cx="10.500" cy="6" r="5.200" /><path d="M6.800 9.700 0.500 16" /></svg>
        <Fit c="ml-[11px] mt-[2px]" w={128} t="Type here to search" />
      </div>
      <svg className="ml-[15px]" width="17" height="17" fill="none" stroke="#fff" strokeWidth="2.200"><circle cx="8.500" cy="8.500" r="6.800" /></svg>
      <svg className="ml-[32px]" width="17" height="16" fill="none" stroke="#fff" strokeWidth="1.200">
        <path d="M1 0v2.500h10V0M1 16v-2.500h10V16M1 5h10v6H1zM15 0v3M15 9v7" /><path d="M13.500 4.500h3v3h-3z" fill="#fff" stroke="none" />
      </svg>
      <Slot c="ml-[22px] w-[40px]" bar>
        <svg width="25" height="25" viewBox="0 0 24 24">
          <defs>
            <linearGradient id="eg" x1="0" y1="0" x2="1" y2="0.400"><stop offset="0" stopColor="#1b9de2" /><stop offset="0.500" stopColor="#35c1d8" /><stop offset="1" stopColor="#62d94f" /></linearGradient>
          </defs>
          <path d="M0.500 11C1 4.500 6 0 12 0c7 0 12 4.500 12 9.800 0 4-3 6.200-6.200 6.200-2.800 0-4.300-1-4-1.800.5-.9 1-1.500 1-2.900C14.800 8.500 11.500 7 8 7 4.500 7 1.500 8.500.5 11z" fill="url(#eg)" />
          <path d="M0.300 12C.5 9 4 6.800 8 7c3 .1 5.500 1.500 6.500 3.300C11 8.500 8.500 10.500 8.500 13.500c0 4 4.500 7.500 10 5.500.8-.3 2.500-1.200 3 0C19.500 22 16 24 12 24 5.500 24 0 19 .3 12z" fill="#0f6cc0" />
          <path d="M8.500 13c-.5 5 4 9 9 9.500-6 3-14 .5-14-6.500C3.500 11.500 6 9 9.500 9z" fill="#2194dd" opacity=".7" />
        </svg>
      </Slot>
      <div className="ml-[9px] flex h-[40px] w-[40px] flex-col items-center justify-between">
        <div className="flex h-[38px] items-center pt-[2px]">
          <svg width="23" height="20"><path d="M1 1.500q0-1 1-1h7l2 2h10q1 0 1 1V8H1z" fill="#e3a21a" /><path d="M1 3.500h21v15H1z" fill="#fdd15f" /><path d="M5 19.500V13q0-2 2-2h9q2 0 2 2v6.500h-4V15H9v4.500z" fill="#3f8fd8" /></svg>
        </div>
        <div className="flex h-[2px] w-full"><div className="w-[31px] bg-[#76b9ed]" /><div className="flex-1 bg-[#5586ae]" /></div>
      </div>
      <Slot c="ml-[9px] w-[40px]">
        <svg width="24" height="24"><path d="M6 6V1.500h12V6" fill="none" stroke="#35b8f1" strokeWidth="2" /><path d="M0.500 4.500h23V20q0 3-3 3h-17q-3 0-3-3z" fill="#f4f4f4" /><path d="M7 9h4.500v4.500H7z" fill="#f25022" /><path d="M12.700 9h4.500v4.500h-4.500z" fill="#7fba00" /><path d="M7 14.700h4.500v4.500H7z" fill="#00a4ef" /><path d="M12.700 14.700h4.500v4.500h-4.500z" fill="#ffb900" /></svg>
      </Slot>
      <Slot c="ml-[9px] w-[40px]" bar>
        <svg width="24" height="22"><path d="M0 8 12 0l12 8v3H0z" fill="#1065b5" /><path d="M2 7.500h20L12 15z" fill="#f4f4f4" /><path d="M0 8l12 8.500L24 8v14H0z" fill="#26a4e6" /><path d="M0 22 24 8v14z" fill="#45bff3" /></svg>
      </Slot>
      <Slot c="ml-[9px] w-[40px]" bar>
        <svg width="25" height="25"><circle cx="12.500" cy="4.200" r="4" fill="#7b83eb" /><circle cx="20.500" cy="5" r="2.800" fill="#5059c9" /><path d="M16 9h8.500v7q0 4-5 4z" fill="#5059c9" /><path d="M6 9h13v9q0 5-6.500 5T6 18z" fill="#7b83eb" /><rect y="6.500" width="12.500" height="12.500" rx="1" fill="#4048b0" /><text x="6.300" y="16.500" textAnchor="middle" fontSize="10" fontWeight="700" fill="#fff">T</text><circle cx="19.500" cy="19.500" r="5" fill="#fff" /><circle cx="19.500" cy="19.500" r="4.300" fill="#7fba00" /><path d="M17.300 19.500l1.700 1.700 3-3" stroke="#fff" strokeWidth="1.300" fill="none" /></svg>
      </Slot>
      <Slot c="ml-[9px] w-[40px]" bar>
        <svg width="24" height="23"><path d="M7 0h15v13H7z" fill="#1066b5" /><path d="M14.500 0H22v6h-7.500z" fill="#32a9e7" /><path d="M14.500 6H22v6h-7.500z" fill="#50d9ff" /><path d="M7 12l17-1v10H7z" fill="#1a8ad6" /><path d="M7 21 24 11v10z" fill="#35b8f1" /><rect y="5" width="12.500" height="12.500" rx="1" fill="#0a64ba" /><circle cx="6.200" cy="11.200" r="3" stroke="#fff" strokeWidth="1.800" fill="none" /></svg>
      </Slot>
      <div className="ml-[5px] flex h-[40px] w-[44px] flex-col items-center justify-between bg-[#505f63]">
        <div className="flex h-[38px] items-center pl-[4px] pt-[2px]"><OfficeTile letter="X" dark="#107c41" shades={["#33c481", "#21a366", "#107c41", "#185c37"]} /></div>
        <div className="h-[2px] w-full bg-[#76b9ed]" />
      </div>
      <div className="flex h-[40px] w-[4px] flex-col border-l border-[#24373c] bg-[#415156]"><div className="mt-auto h-[2px] bg-[#5586ae]" /></div>
      <Slot c="ml-[5px] w-[40px]" bar><OfficeTile letter="W" dark="#185abd" shades={["#41a5ee", "#2b7cd3", "#185abd", "#103f91"]} /></Slot>
      <svg className="ml-[416px]" width="22" height="23">
        <path d="M5 12.500a4.500 4.500 0 0 1 0-8.500A6 6 0 0 1 16 4a4.500 4.500 0 0 1 1 9z" fill="#b9dcf5" />
        <path d="M5 11.500a3.500 3.500 0 0 1 1-6.500 5 5 0 0 1 8-2z" fill="#e2f1fb" />
        <path d="M10 12l1.800 4q0 1.500-1.800 1.500T8.200 16zM16.500 13l1.800 4q0 1.500-1.800 1.500T14.700 17zM6 17l1.800 4q0 1.500-1.800 1.500T4.200 21z" fill="#4aa5e8" />
      </svg>
      <div className="flex text-[14px]"><Fit c="ml-[10px] mt-px" w={29} t="33°C" /><Fit c="ml-[10px] mt-px" w={36} t="Hujan" /></div>
      <svg className="ml-[16px]" width="13" height="8" fill="none" stroke="#fff" strokeWidth="1.300"><path d="M1 7 6.500 1.300 12 7" /></svg>
      <svg className="ml-[9px]" width="18" height="18" fill="none" stroke="#fff" strokeWidth="1.200"><path d="M1 3.500 15 1v14L1 14zM11.500 5.500C8 4.500 5 6 5 9M5 10.500c1 1.500 3 2 5 1.500M11.500 3.500v2.500H9M5 12.500v-2.500h2.500" /><circle cx="12.500" cy="14" r="3.500" fill="#e81123" stroke="none" /></svg>
      <svg className="ml-[6px]" width="15" height="14" fill="none" stroke="#fff" strokeWidth="1.200"><path d="M1 4.500h2.500L7 1v12L3.500 9.500H1zM9.500 4.500l4.500 5M14 4.500l-4.500 5" /></svg>
      <div className="ml-[7px] flex w-[58px] flex-col items-center text-[12px] leading-[18px]"><Fit w={43} t="2:59 PM" /><Fit w={57} t="12/31/2021" /></div>
      <svg className="ml-[15px] mt-[8px]" width="26" height="26">
        <path d="M0 1h16v13h-6l-4 4v-4H0z" fill="#fff" /><path d="M3 4.500h10M3 7.500h10M3 10.500h7" stroke="#24373c" />
        <circle cx="15.500" cy="16.500" r="8" fill="#1f2a2d" stroke="#8a9598" />
        <text x="15.500" y="20.800" textAnchor="middle" fontSize="12" fill="#fff">8</text>
      </svg>
      <div className="ml-[8px] h-[40px] w-px bg-[#6d7b7e]" />
    </footer>
  );
}

export default function App() {
  return (
    <div className="flex h-[900px] w-[1600px] flex-col overflow-hidden bg-[#f3f2f1] font-['Open_Sans','Noto_Sans',sans-serif]">
      <TitleBar />
      <Tabs />
      <Ribbon />
      <FormulaBar />
      <Workbook />
      <SheetTabs />
      <StatusBar />
      <Taskbar />
    </div>
  );
}
